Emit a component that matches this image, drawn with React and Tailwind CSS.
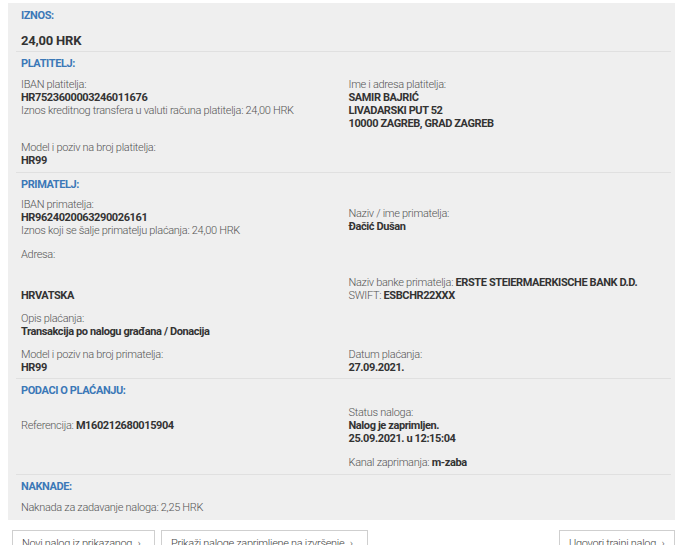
import React from 'react';

function Header({ children }) {
  return <div className="text-[11px] leading-[13px] font-bold tracking-[-0.4px] text-[#3b78b7] uppercase">{children}</div>;
}

function Label({ children }) {
  return <div className="font-light tracking-[-0.3px] text-[#555]">{children}</div>;
}

function Value({ children }) {
  return <div className="font-bold tracking-[-0.4px] text-[#333]">{children}</div>;
}

function B({ children }) {
  return <span className="font-bold tracking-[-0.4px] text-[#333]">{children}</span>;
}

function Button({ children, className = '' }) {
  return (
    <button className={`h-[24px] overflow-hidden whitespace-nowrap bg-white border border-[#cfcfcf] px-[9px] pt-[3px] text-left text-[11px] leading-[13px] font-light tracking-[-0.3px] text-[#444] ${className}`}>
      {children} <span className="ml-[3px] text-[#666]">›</span>
    </button>
  );
}

export default function App() {
  return (
    <div className="w-[675px] h-[545px] overflow-hidden bg-white text-[11px] leading-[13px]" style={{ fontFamily: 'Roboto, "Liberation Sans", sans-serif' }}>
      <div className="ml-[8px] mt-[3px] bg-[#efefef] pl-[8px] pr-[4px] pb-[6px]">
        {/* IZNOS */}
        <section className="border-b border-[#e0e0e0] pl-[5px] pt-[6px] pb-[2px]">
          <Header>Iznos:</Header>
          <div className="mt-[11px] text-[13px] leading-[16px] font-bold tracking-[-0.2px] text-[#333]">24,00 HRK</div>
        </section>

        {/* PLATITELJ */}
        <section className="border-b border-[#e0e0e0] pt-[5px] pb-[5px]">
          <div className="pl-[5px]"><Header>Platitelj:</Header></div>
          <div className="mt-[8px] grid grid-cols-2">
            <div className="pl-[5px]">
              <Label>IBAN platitelja:</Label>
              <Value>HR7523600003246011676</Value>
              <Label>Iznos kreditnog transfera u valuti računa platitelja: 24,00 HRK</Label>
            </div>
            <div className="pl-[5px]">
              <Label>Ime i adresa platitelja:</Label>
              <Value>SAMIR BAJRIĆ</Value>
              <Value>LIVADARSKI PUT 52</Value>
              <Value>10000 ZAGREB, GRAD ZAGREB</Value>
            </div>
          </div>
          <div className="mt-[11px] pl-[5px]">
            <Label>Model i poziv na broj platitelja:</Label>
            <Value>HR99</Value>
          </div>
        </section>

        {/* PRIMATELJ */}
        <section className="border-b border-[#e0e0e0] pt-[5px] pb-[4px]">
          <div className="pl-[5px]"><Header>Primatelj:</Header></div>
          <div className="mt-[7px] grid grid-cols-2">
            <div className="pl-[5px]">
              <Label>IBAN primatelja:</Label>
              <Value>HR9624020063290026161</Value>
              <Label>Iznos koji se šalje primatelju plaćanja: 24,00 HRK</Label>
            </div>
            <div className="pl-[5px] pt-[9px]">
              <Label>Naziv / ime primatelja:</Label>
              <Value>Đačić Dušan</Value>
            </div>
          </div>
          <div className="mt-[11px] grid grid-cols-2 items-end">
            <div className="pl-[5px]">
              <Label>Adresa:</Label>
              <div className="mt-[28px]"><Value>HRVATSKA</Value></div>
            </div>
            <div className="pl-[5px] font-light tracking-[-0.3px] text-[#555]">
              <div>Naziv banke primatelja: <B>ERSTE STEIERMAERKISCHE BANK D.D.</B></div>
              <div>SWIFT: <B>ESBCHR22XXX</B></div>
            </div>
          </div>
          <div className="mt-[10px] pl-[5px]">
            <Label>Opis plaćanja:</Label>
            <Value>Transakcija po nalogu građana / Donacija</Value>
          </div>
          <div className="mt-[10px] grid grid-cols-2">
            <div className="pl-[5px]">
              <Label>Model i poziv na broj primatelja:</Label>
              <Value>HR99</Value>
            </div>
            <div className="pl-[5px]">
              <Label>Datum plaćanja:</Label>
              <Value>27.09.2021.</Value>
            </div>
          </div>
        </section>

        {/* PODACI O PLAĆANJU */}
        <section className="border-b border-[#e0e0e0] pt-[5px] pb-[5px]">
          <div className="pl-[5px]"><Header>Podaci o plaćanju:</Header></div>
          <div className="mt-[9px] grid grid-cols-2 items-center">
            <div className="pl-[5px] font-light tracking-[-0.3px] text-[#555]">Referencija: <B>M160212680015904</B></div>
            <div className="pl-[5px]">
              <Label>Status naloga:</Label>
              <Value>Nalog je zaprimljen.</Value>
              <Value>25.09.2021. u 12:15:04</Value>
            </div>
          </div>
          <div className="mt-[11px] grid grid-cols-2">
            <div />
            <div className="pl-[5px] font-light tracking-[-0.3px] text-[#555]">Kanal zaprimanja: <B>m-zaba</B></div>
          </div>
        </section>

        {/* NAKNADE */}
        <section className="pt-[5px] pl-[5px]">
          <Header>Naknade:</Header>
          <div className="mt-[8px] font-light tracking-[-0.3px] text-[#555]">Naknada za zadavanje naloga: 2,25 HRK</div>
        </section>
      </div>

      <div className="mt-[10px] flex pl-[12px]">
        <Button className="w-[143px]">Novi nalog iz prikazanog</Button>
        <Button className="ml-[6px] w-[207px]">Prikaži naloge zaprimljene na izvršenje</Button>
        <Button className="ml-auto w-[116px]">Ugovori trajni nalog</Button>
      </div>
    </div>
  );
}
